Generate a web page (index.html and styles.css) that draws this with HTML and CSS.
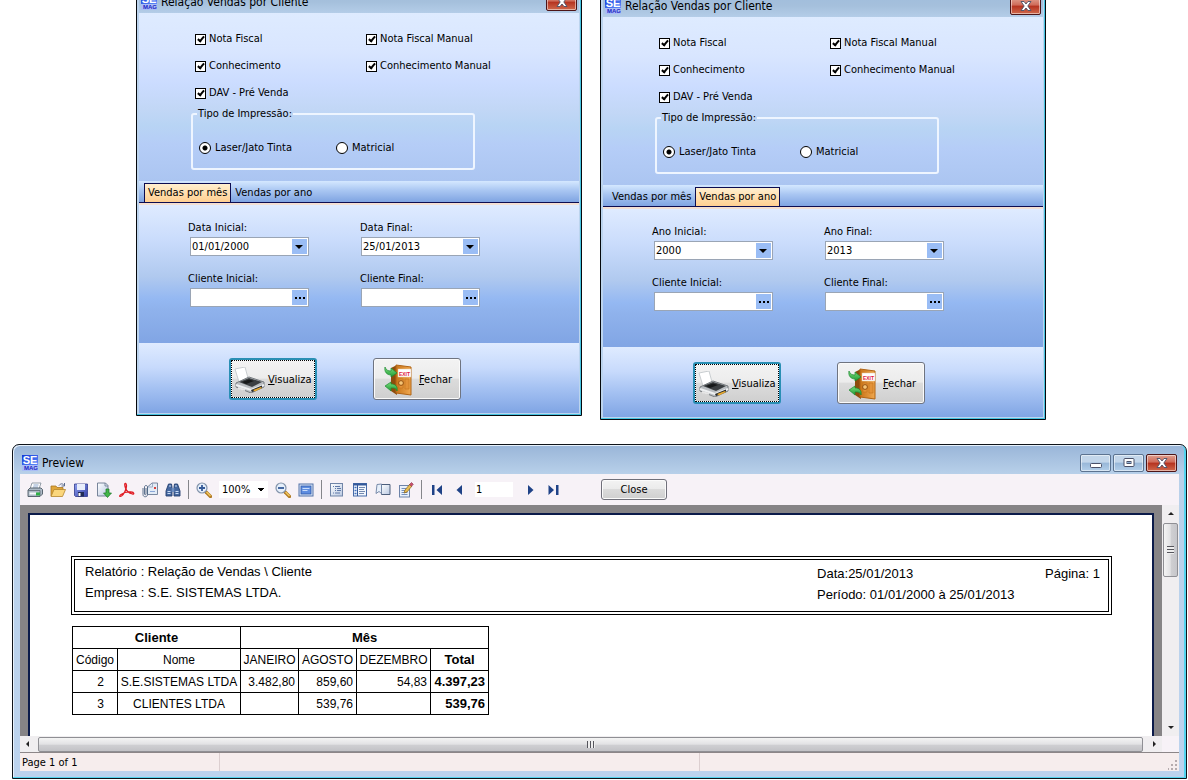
FILE: index.html
```html
<!DOCTYPE html>
<html lang="pt-BR">
<head>
<meta charset="utf-8">
<title>Relação Vendas por Cliente</title>
<link rel="stylesheet" href="styles.css">
</head>
<body>
<svg class="defs" aria-hidden="true">
  <defs>
    <linearGradient id="gBlue" x1="0" y1="0" x2="1" y2="1"><stop offset="0" stop-color="#1238d8"/><stop offset="1" stop-color="#5f8dfa"/></linearGradient>
    <linearGradient id="gDoor" x1="0" y1="0" x2="1" y2="0"><stop offset="0" stop-color="#c87418"/><stop offset="1" stop-color="#f0a850"/></linearGradient>
    <linearGradient id="gGreen" x1="0" y1="0" x2="0" y2="1"><stop offset="0" stop-color="#7ee07e"/><stop offset="1" stop-color="#1d9a35"/></linearGradient>
    <linearGradient id="gSave" x1="0" y1="0" x2="1" y2="1"><stop offset="0" stop-color="#8fa0ee"/><stop offset="1" stop-color="#3440a8"/></linearGradient>
    <linearGradient id="gPage" x1="0" y1="0" x2="1" y2="1"><stop offset="0" stop-color="#ffffff"/><stop offset="1" stop-color="#b9c8e2"/></linearGradient>
  </defs>
  <symbol id="logo" viewBox="0 0 16 16">
    <rect width="16" height="10" fill="url(#gBlue)"/>
    <rect y="10" width="16" height="6" fill="#a9bdf5"/>
    <text x="8" y="9" text-anchor="middle" class="logo-se">SE</text>
    <text x="9" y="15" text-anchor="middle" class="logo-mag">MAG</text>
  </symbol>
  <symbol id="printer" viewBox="0 0 32 26">
    <path d="M1 2 11 0 14 11 5 15Z" fill="#fff" stroke="#c9cdd0"/>
    <path d="M2 16 15 10 30 15 30 20 17 26 2 20Z" fill="#b9bdc1" stroke="#777c80"/>
    <path d="M5 15 15 11 28 15 18 20Z" fill="#3b3f42"/>
    <path d="M8 15 15 12.500 20 14 12 17Z" fill="#17191a"/>
    <path d="M2 18 17 23 30 18" fill="none" stroke="#eef0f2" stroke-width="2"/>
    <path d="M17 23 28 18.500V21L18 25Z" fill="#26292b"/>
    <path d="M19 23 27 20 28 21 21 24.500Z" fill="#e8a92e"/>
    <path d="M4 21 11 23" stroke="#e6e6e6" stroke-width="2"/>
  </symbol>
  <symbol id="exit" viewBox="0 0 29 32">
    <path d="M7 4 13 1V31L7 27Z" fill="#8d4d0c"/>
    <path d="M12 1 27 3V31L12 29Z" fill="url(#gDoor)" stroke="#b06415"/>
    <path d="M15 15h4v9h-4zM21 15h4v10h-4z" fill="#e39238" stroke="#c4731d" stroke-width=".6"/>
    <rect x="14" y="5" width="13" height="8" fill="#fff" stroke="#e2c9a9" stroke-width=".5"/>
    <text x="20.500" y="11.500" text-anchor="middle" class="exit-text">EXIT</text>
    <circle cx="17" cy="19" r="2.400" fill="#f5c476" stroke="#955010"/>
    <path d="M1 3C2 6 4 7 7 7V4L13 9 7 13V11C3 11 0 8 1 3Z" fill="url(#gGreen)" stroke="#1c8a30" stroke-width=".7"/>
    <path d="M13 27C12 24 10 24 7 24V27L1 22 7 18V20C11 20 14 22 13 27Z" fill="url(#gGreen)" stroke="#1c8a30" stroke-width=".7"/>
  </symbol>
  <symbol id="cross" viewBox="0 0 12 10">
    <path d="M1 .500h3L6 3 8 .500h3L7.800 5 11 9.500H8L6 7 4 9.500H1L4.200 5Z" fill="#fff" stroke="#4a5068" stroke-width=".9"/>
  </symbol>
</svg>

<main class="desktop">
  <section class="dialogs">
    <form class="dialog">
      <header class="titlebar">
        <svg class="logo"><use href="#logo"/></svg>
        <h2 class="title">Relação Vendas por Cliente</h2>
        <button type="button" class="win-btn win-close" aria-label="Fechar janela"><svg class="cross"><use href="#cross"/></svg></button>
      </header>
      <div class="options">
        <div class="checks">
          <label class="check"><input type="checkbox" checked><span>Nota Fiscal</span></label>
          <label class="check"><input type="checkbox" checked><span>Nota Fiscal Manual</span></label>
          <label class="check"><input type="checkbox" checked><span>Conhecimento</span></label>
          <label class="check"><input type="checkbox" checked><span>Conhecimento Manual</span></label>
          <label class="check"><input type="checkbox" checked><span>DAV - Pré Venda</span></label>
        </div>
        <fieldset class="group">
          <legend>Tipo de Impressão:</legend>
          <label class="radio"><input type="radio" name="impr1" checked><span>Laser/Jato Tinta</span></label>
          <label class="radio"><input type="radio" name="impr1"><span>Matricial</span></label>
        </fieldset>
      </div>
      <div class="tabs" role="tablist">
        <button type="button" role="tab" class="tab active" aria-selected="true">Vendas por mês</button>
        <button type="button" role="tab" class="tab" aria-selected="false">Vendas por ano</button>
      </div>
      <div class="fields">
        <div class="field"><label for="a1">Data Inicial:</label><div class="box combo"><select id="a1"><option>01/01/2000</option></select></div></div>
        <div class="field"><label for="a2">Data Final:</label><div class="box combo"><select id="a2"><option>25/01/2013</option></select></div></div>
        <div class="field"><label for="a3">Cliente Inicial:</label><div class="box"><input type="text" id="a3"><button type="button" class="more" aria-label="Procurar cliente inicial"></button></div></div>
        <div class="field"><label for="a4">Cliente Final:</label><div class="box"><input type="text" id="a4"><button type="button" class="more" aria-label="Procurar cliente final"></button></div></div>
      </div>
      <footer class="actions">
        <button type="button" class="action default"><svg class="printer"><use href="#printer"/></svg><span><u>V</u>isualiza</span></button>
        <button type="button" class="action"><svg class="exit"><use href="#exit"/></svg><span><u>F</u>echar</span></button>
      </footer>
    </form>

    <form class="dialog lower">
      <header class="titlebar">
        <svg class="logo"><use href="#logo"/></svg>
        <h2 class="title">Relação Vendas por Cliente</h2>
        <button type="button" class="win-btn win-close" aria-label="Fechar janela"><svg class="cross"><use href="#cross"/></svg></button>
      </header>
      <div class="options">
        <div class="checks">
          <label class="check"><input type="checkbox" checked><span>Nota Fiscal</span></label>
          <label class="check"><input type="checkbox" checked><span>Nota Fiscal Manual</span></label>
          <label class="check"><input type="checkbox" checked><span>Conhecimento</span></label>
          <label class="check"><input type="checkbox" checked><span>Conhecimento Manual</span></label>
          <label class="check"><input type="checkbox" checked><span>DAV - Pré Venda</span></label>
        </div>
        <fieldset class="group">
          <legend>Tipo de Impressão:</legend>
          <label class="radio"><input type="radio" name="impr2" checked><span>Laser/Jato Tinta</span></label>
          <label class="radio"><input type="radio" name="impr2"><span>Matricial</span></label>
        </fieldset>
      </div>
      <div class="tabs" role="tablist">
        <button type="button" role="tab" class="tab" aria-selected="false">Vendas por mês</button>
        <button type="button" role="tab" class="tab active" aria-selected="true">Vendas por ano</button>
      </div>
      <div class="fields">
        <div class="field"><label for="b1">Ano Inicial:</label><div class="box combo"><select id="b1"><option>2000</option></select></div></div>
        <div class="field"><label for="b2">Ano Final:</label><div class="box combo"><select id="b2"><option>2013</option></select></div></div>
        <div class="field"><label for="b3">Cliente Inicial:</label><div class="box"><input type="text" id="b3"><button type="button" class="more" aria-label="Procurar cliente inicial"></button></div></div>
        <div class="field"><label for="b4">Cliente Final:</label><div class="box"><input type="text" id="b4"><button type="button" class="more" aria-label="Procurar cliente final"></button></div></div>
      </div>
      <footer class="actions">
        <button type="button" class="action default"><svg class="printer"><use href="#printer"/></svg><span><u>V</u>isualiza</span></button>
        <button type="button" class="action"><svg class="exit"><use href="#exit"/></svg><span><u>F</u>echar</span></button>
      </footer>
    </form>
  </section>

  <section class="preview">
    <header class="titlebar">
      <svg class="logo"><use href="#logo"/></svg>
      <h2 class="title">Preview</h2>
      <button type="button" class="win-btn" aria-label="Minimizar"><svg viewBox="0 0 12 10" class="cross"><rect x=".5" y="5.500" width="11" height="4" rx="1" fill="#fff" stroke="#4a5068"/></svg></button>
      <button type="button" class="win-btn" aria-label="Maximizar"><svg viewBox="0 0 12 10" class="cross"><rect x="1" y=".5" width="10" height="8" rx="1" fill="#fff" stroke="#4a5068"/><rect x="4" y="3.500" width="4" height="2" fill="#8fb0d4" stroke="#4a5068"/></svg></button>
      <button type="button" class="win-btn win-close" aria-label="Fechar preview"><svg class="cross"><use href="#cross"/></svg></button>
    </header>

    <div class="client">
      <div class="toolbar">
        <button type="button" class="tool" aria-label="Imprimir"><svg viewBox="0 0 16 16"><path d="M5 1h9l-2 6H3Z" fill="#fff" stroke="#7c8894" stroke-width=".8"/><path d="M6.500 3h5M6 5h5" stroke="#6f8fc0" stroke-width=".8"/><path d="M1 8 3 6h11l1.500 1.500V12L13 14.500H1Z" fill="#aebac6" stroke="#4c5964" stroke-width=".9"/><path d="M1 8.500h12V14" fill="none" stroke="#5d6872" stroke-width=".8"/><path d="M2.500 10.500h7v2h-7z" fill="#f5f8fa"/><path d="M9 10.500h4v3H9z" fill="#2fae45"/></svg></button>
        <button type="button" class="tool" aria-label="Abrir"><svg viewBox="0 0 16 16"><path d="M1 14V4h5l1 1.500h6V8" fill="#e0a63a" stroke="#a87722" stroke-width=".8"/><path d="M1 14.500 4 7.500h11.500L12.500 14.500Z" fill="#fbd67c" stroke="#b5852c" stroke-width=".8"/><path d="M9 3.500c2-2.500 4-2 5 0M14.500 1v3h-3" fill="none" stroke="#5b6c8e"/></svg></button>
        <button type="button" class="tool" aria-label="Salvar"><svg viewBox="0 0 16 16"><path d="M1.500 2h13v12.500h-12l-1-1Z" fill="url(#gSave)" stroke="#30398c" stroke-width=".8"/><path d="M4 2h8v6H4z" fill="#e8edfb"/><path d="M5 10h6v4.500H5z" fill="#202a55"/><path d="M5.500 11h2v3h-2z" fill="#fff"/></svg></button>
        <button type="button" class="tool" aria-label="Exportar"><svg viewBox="0 0 16 16"><path d="M1.500 1h8L12 3.500V14H1.500Z" fill="url(#gPage)" stroke="#6a7890" stroke-width=".9"/><path d="M9 1v3h3" fill="none" stroke="#6a7890" stroke-width=".8"/><path d="M10 7h3v4h2.500l-4 4.500-4-4.500H10Z" fill="#43b649" stroke="#187626" stroke-width=".7"/></svg></button>
        <button type="button" class="tool" aria-label="PDF"><svg viewBox="0 0 16 16"><path d="M6.500 1.500C5.500 1 5.500 3 6.500 6S10 11 13.500 12c2 .5 1.500-2-1-2C8 9.500 4 11 2 12.500S.500 15 2.500 14C5 12.500 7.500 7 7.500 4 7.500 2.500 7 1.500 6.500 1.500Z" fill="none" stroke="#e01c24" stroke-width="1.300"/></svg></button>
        <button type="button" class="tool" aria-label="Enviar por e-mail"><svg viewBox="0 0 16 16"><path d="M5.500 5 10 1h5.500v11.500H5.500Z" fill="#e3ebf6" stroke="#6d7c96" stroke-width=".9"/><path d="M5.500 5h5V1" fill="none" stroke="#8fa0ba" stroke-width=".8"/><path d="M12 5h2v2h-2z" fill="#d8403a"/><path d="M8 9.500h5" stroke="#8ba7d8"/><path d="M1 6v6.500c0 3 4.500 3 4.500 0V5c0-2-3-2-3 0v7c0 1 1.500 1 1.500 0V6" fill="none" stroke="#4d6482" stroke-width=".9"/></svg></button>
        <button type="button" class="tool" aria-label="Localizar"><svg viewBox="0 0 16 16"><path d="M3.500 2h3l.5 3v9H1V9Zm6 0h3L15 9v5H9V5Z" fill="#4668a0" stroke="#253f70" stroke-width=".9"/><path d="M6.500 6h3v4h-3z" fill="#6d8dc0"/><path d="M2.500 9.500h3M10.500 9.500h3M4 4h2M10 4h2M2.500 11.500h3M10.500 11.500h3" stroke="#cadcf6"/></svg></button>
        <span class="sep"></span>
        <button type="button" class="tool" aria-label="Aumentar zoom"><svg viewBox="0 0 16 16"><path d="m10 10 4.500 4.500" stroke="#b17a22" stroke-width="3.200" stroke-linecap="round"/><path d="m10.500 10 4 4" stroke="#f2c860" stroke-width="1.500"/><circle cx="6" cy="6" r="5" fill="#e6effb" stroke="#8494ab" stroke-width="1.200"/><path d="M3 6h6M6 3v6" stroke="#355a98" stroke-width="1.800"/></svg></button>
        <select class="zoom" aria-label="Zoom"><option>100%</option></select>
        <button type="button" class="tool" aria-label="Diminuir zoom"><svg viewBox="0 0 16 16"><path d="m10 10 4.500 4.500" stroke="#b17a22" stroke-width="3.200" stroke-linecap="round"/><path d="m10.500 10 4 4" stroke="#f2c860" stroke-width="1.500"/><circle cx="6" cy="6" r="5" fill="#e6effb" stroke="#8494ab" stroke-width="1.200"/><path d="M3 6h6" stroke="#355a98" stroke-width="1.800"/></svg></button>
        <button type="button" class="tool" aria-label="Tela cheia"><svg viewBox="0 0 16 16"><rect x="1" y="2" width="14" height="12" fill="#d9e5f8" stroke="#5572a8"/><rect x="3" y="4" width="10" height="8" fill="#5f8de0" stroke="#2d58a8" stroke-width=".8"/><path d="M4.500 6.500h7M4.500 8.500h5" stroke="#c9dcfb"/></svg></button>
        <span class="sep"></span>
        <button type="button" class="tool" aria-label="Estrutura"><svg viewBox="0 0 16 16"><rect x="1.500" y="1.500" width="12" height="12.500" fill="url(#gPage)" stroke="#7185a8"/><path d="M4 4.500h1M6 4.500h5M6 6.500h1M8 6.500h4M6 8.500h1M8 8.500h4M4 11h1M6 11h5" stroke="#6079a8"/></svg></button>
        <button type="button" class="tool" aria-label="Miniaturas"><svg viewBox="0 0 16 16"><rect x="1.500" y="1.500" width="13" height="12.500" fill="#f2f6fd" stroke="#466aa8"/><path d="M1.500 2.500h13" stroke="#34589a" stroke-width="2"/><path d="M5.500 2v12" stroke="#34589a"/><path d="M2.500 5.500h2M2.500 8.500h2M2.500 11.500h2" stroke="#4371bd" stroke-width="1.500"/><path d="M7 5.500h6M7 7.500h5M7 9.500h6M7 11.500h5" stroke="#7389b0"/></svg></button>
        <button type="button" class="tool" aria-label="Margens"><svg viewBox="0 0 16 16"><path d="M6.500 2.500h8.500v10H6.500Z" fill="url(#gPage)" stroke="#4e5f7c"/><path d="M6.500 9.500V2L2 2.500 1 11.500l3-2 2.500 2Z" fill="#e7effa" stroke="#6c80a2" stroke-width=".9"/></svg></button>
        <button type="button" class="tool" aria-label="Editar"><svg viewBox="0 0 16 16"><rect x="1.500" y="3.500" width="10" height="11.500" fill="#eaf1fb" stroke="#6d83a8"/><path d="M3.500 6.500h5M3.500 8.500h4M3.500 10.500h6M3.500 12.500h6" stroke="#7590bc"/><path d="m6 11 1-3 5-6 2 2-5 6Z" fill="#e9bd50" stroke="#86611a" stroke-width=".7"/><path d="m11.500 2.500 2-2 1.800 1.800-1.800 2Z" fill="#c8506c" stroke="#8c2c46" stroke-width=".6"/></svg></button>
        <span class="sep"></span>
        <button type="button" class="tool" aria-label="Primeira página"><svg viewBox="0 0 16 16"><path d="M3 3h2.500v10H3zM13 3v10L7.500 8Z" fill="#1f4287"/></svg></button>
        <button type="button" class="tool" aria-label="Página anterior"><svg viewBox="0 0 16 16"><path d="M10 3v10L4.500 8Z" fill="#1f4287"/></svg></button>
        <input class="page-no" type="text" value="1" aria-label="Página">
        <button type="button" class="tool" aria-label="Próxima página"><svg viewBox="0 0 16 16"><path d="M8 3v10l5.500-5Z" fill="#1f4287"/></svg></button>
        <button type="button" class="tool" aria-label="Última página"><svg viewBox="0 0 16 16"><path d="M13 3h2.500v10H13zM5.500 3v10L11 8Z" fill="#1f4287"/></svg></button>
        <button type="button" class="close-btn">Close</button>
      </div>

      <div class="viewer">
        <div class="canvas">
          <article class="page">
            <div class="report-head">
              <div class="rh-left"><p>Relatório : Relação de Vendas \ Cliente</p><p>Empresa : S.E. SISTEMAS LTDA.</p></div>
              <div class="rh-mid"><p>Data:25/01/2013</p><p>Período: 01/01/2000 à 25/01/2013</p></div>
              <p class="rh-page">Página: 1</p>
            </div>
            <table class="report">
              <colgroup><col class="c-cod"><col class="c-nome"><col class="c-mes"><col class="c-mes"><col class="c-dez"><col class="c-mes"></colgroup>
              <thead>
                <tr><th class="strong" colspan="2">Cliente</th><th class="strong" colspan="4">Mês</th></tr>
                <tr><th>Código</th><th>Nome</th><th>JANEIRO</th><th>AGOSTO</th><th>DEZEMBRO</th><th class="strong">Total</th></tr>
              </thead>
              <tbody>
                <tr><td class="cod">2</td><td class="nome">S.E.SISTEMAS LTDA</td><td>3.482,80</td><td>859,60</td><td>54,83</td><td class="strong">4.397,23</td></tr>
                <tr><td class="cod">3</td><td class="nome">CLIENTES LTDA</td><td></td><td>539,76</td><td></td><td class="strong">539,76</td></tr>
              </tbody>
            </table>
          </article>
        </div>
        <div class="vbar"><i class="arrow up"></i><div class="vthumb"><i></i></div><i class="arrow down"></i></div>
        <div class="hbar"><i class="arrow left"></i><div class="hthumb"><i></i></div><i class="arrow right"></i></div>
        <div class="corner"></div>
      </div>

      <footer class="status">
        <span class="st-page">Page 1 of 1</span><span class="st-mid"></span><span class="st-end"></span>
        <svg class="grip" viewBox="0 0 10 10"><path d="M7 0h2v2H7zM7 4h2v2H7zM3 4h2v2H3zM7 8h2v2H7zM3 8h2v2H3zM0 8h1v2H0z" fill="#b5abad"/></svg>
      </footer>
    </div>
  </section>
</main>
</body>
</html>
```
FILE: styles.css
```css
* { box-sizing: border-box; }

body {
  margin: 0;
  background: #fff;
  color: #000;
  font: 11px/14px "DejaVu Sans Condensed", Tahoma, "Noto Sans", sans-serif;
  overflow: hidden;
}

h2, p, fieldset { margin: 0; }
button, input, select { font: inherit; color: inherit; margin: 0; }
button { padding: 0; }
.defs { position: absolute; width: 0; height: 0; }
.logo-se { font: bold 11px "Liberation Sans", sans-serif; fill: #fff; }
.logo-mag { font: bold 6px "Liberation Sans", sans-serif; fill: #1c22c4; }
.exit-text { font: bold 5px "Liberation Sans", sans-serif; fill: #e0203c; }

.desktop {
  display: flex;
  flex-direction: column;
  height: 100vh;
  padding-bottom: 1px;
}

/* Dialog windows */
.dialogs {
  display: flex;
  align-items: flex-start;
  gap: 18px;
  margin-top: -16px;
  padding-left: 136px;
}
.dialog {
  width: 446px;
  border: 1px solid #05080d;
  border-radius: 7px 7px 0 0;
  box-shadow: inset -1px -1px #45c3e0;
  padding: 0 2px 2px;
  background: #bcd4ee;
}
.dialog.lower { margin-top: 4px; }

.titlebar {
  display: flex;
  align-items: center;
  gap: 2px;
  height: 28px;
  padding: 6px 2px 0 2px;
}
.dialog .titlebar { background: linear-gradient(#9ebbdc, #a5c0dc 60%, #b4cde8); }
.logo { width: 16px; height: 16px; margin-right: 2px; }
.title { flex: 1; font-weight: normal; font-size: 12px; line-height: 16px; }
.win-btn {
  display: flex;
  align-items: center;
  justify-content: center;
  width: 31px;
  height: 18px;
  border: 1px solid #5c7390;
  border-radius: 2px;
  box-shadow: inset 0 0 0 1px rgba(255, 255, 255, .5);
  background: linear-gradient(#c3d6ea 45%, #98b7d8 50%, #b3cfea);
}
.win-close {
  border-color: #4c1518;
  background: linear-gradient(#e0a090, #cf6a58 45%, #b5321f 50%, #d0694c);
}
.cross { width: 12px; height: 10px; }

.options {
  padding: 16px 0 11px;
  background: linear-gradient(#deebff, #d9e6ff 22%, #cbdcff 42%, #c2d7f6 57%, #b8d4f4 67%, #b5cdf7 78%, #abc5f1);
}
.checks {
  display: grid;
  grid-template-columns: 171px 1fr;
  row-gap: 7px;
  padding-left: 56px;
}
.check, .radio { display: flex; align-items: center; }
.check { gap: 3px; height: 20px; }
.radio { gap: 4px; }
.check input {
  appearance: none;
  width: 11px;
  height: 11px;
  border: 1px solid #000;
  background: #fff;
  position: relative;
}
.check input:checked::after {
  content: "";
  position: absolute;
  left: 3px;
  top: 0;
  width: 4px;
  height: 7px;
  border: solid #000;
  border-width: 0 2px 2px 0;
  box-sizing: border-box;
  transform: rotate(40deg);
}
.radio input {
  appearance: none;
  width: 12px;
  height: 12px;
  border: 1px solid #000;
  border-radius: 50%;
  background: #fff;
}
.radio input:checked { background: radial-gradient(circle, #000 0 2px, #fff 3px); }
.group {
  display: grid;
  grid-template-columns: 137px 1fr;
  width: 284px;
  height: 63px;
  margin: 4px 0 0 52px;
  padding: 20px 0 0 6px;
  align-items: start;
  border: 2px solid #eef5ff;
  border-radius: 3px;
}
.group legend { padding: 0 1px; margin-left: -2px; }

.tabs {
  display: flex;
  align-items: flex-end;
  height: 22px;
  padding-left: 5px;
  border-bottom: 1px solid #0c0c50;
  background: linear-gradient(#d4e8ff, #a9c6f2 45%, #7fa4e2);
}
.tab {
  height: 19px;
  padding: 0 3px;
  border: 1px solid transparent;
  border-bottom: 0;
  background: none;
  line-height: 18px;
  white-space: nowrap;
}
.tab.active {
  border-color: #0c0c50;
  background: linear-gradient(#ffefcf, #ffcf91);
}

.fields {
  display: grid;
  grid-template-columns: 119px 119px;
  gap: 16px 52px;
  padding: 16px 0 36px 51px;
  border-top: 2px solid #f3dfd3;
  background: linear-gradient(#dfebff, #cadcfc 25%, #b0c9ef 52%, #94b8f2 68%, #8fb2ec 76%, #81a5e4);
}
.field label { display: block; height: 16px; }
.field:nth-child(odd) label { margin-left: -2px; }
.field:nth-child(even) label { margin-left: -1px; }
.box {
  display: flex;
  height: 19px;
  border: 1px solid #9aa5b5;
  background: #fff;
  padding: 1px;
  position: relative;
}
.box select, .box input {
  appearance: none;
  flex: 1;
  min-width: 0;
  border: 0;
  padding: 0;
  background: none;
  line-height: 15px;
}
.more {
  display: grid;
  place-items: center;
  width: 15px;
  border: 0;
  background: #9abdf5;
}
.more::before {
  content: "";
  width: 2px;
  height: 2px;
  background: #000;
  box-shadow: -4px 0 #000, 4px 0 #000;
}
.combo::after {
  content: "";
  position: absolute;
  right: 1px;
  top: 1px;
  width: 15px;
  height: 15px;
  background: #9abdf5;
  pointer-events: none;
}
.combo::before {
  content: "";
  position: absolute;
  z-index: 1;
  right: 5px;
  top: 7px;
  border: 4px solid transparent;
  border-top-color: #000;
  border-bottom: 0;
  pointer-events: none;
}

.actions {
  display: flex;
  gap: 56px;
  padding: 15px 0 13px 90px;
  background: linear-gradient(#dfebff, #c7dafc 35%, #a4c1f2 65%, #80a5e4);
}
.action {
  display: flex;
  align-items: center;
  gap: 5px;
  width: 88px;
  height: 42px;
  padding: 3px 4px 1px;
  border: 1px solid #6f7480;
  border-radius: 3px;
  box-shadow: inset 0 0 0 1px #fafafa;
  background: linear-gradient(#f3f3f3, #ececec 48%, #dcdcdc 50%, #cfcfcf);
}
.action:not(.default) { padding-left: 10px; gap: 6px; }
.action.default {
  gap: 2px;
  border: 2px solid #2a8fb4;
  padding: 2px 3px 0;
  outline: 1px dotted #000;
  outline-offset: -3px;
}
.action span { white-space: nowrap; }
.printer { width: 32px; height: 26px; flex: none; }
.exit { width: 29px; height: 32px; flex: none; }

/* Preview window */
.preview {
  flex: 1;
  min-height: 0;
  display: flex;
  flex-direction: column;
  margin: 28px 1px 0 12px;
  border: 1px solid #10141a;
  border-radius: 7px 7px 0 0;
  box-shadow: inset -2px -1px #54d4ee, inset 1px 1px #e8f2fc;
  padding: 0 7px 7px;
  background: linear-gradient(#99b5d8, #b9d1ea 30px, #bcd3ee);
  margin-top: 24px;
}
.preview .titlebar { height: 29px; }
.client {
  flex: 1;
  min-height: 0;
  display: flex;
  flex-direction: column;
  background: #f7f2f7;
}
.toolbar {
  display: flex;
  align-items: center;
  gap: 7px;
  height: 31px;
  padding-left: 7px;
}
.tool { width: 16px; height: 16px; border: 0; background: none; }
.tool svg { display: block; width: 16px; height: 16px; }
.sep { width: 1px; height: 19px; background: #85858a; }
.zoom {
  appearance: none;
  width: 49px;
  height: 17px;
  border: 0;
  padding: 0 0 0 3px;
  background:
    linear-gradient(to bottom right, #000 50%, transparent 50%) 42px 7px / 3px 3px no-repeat,
    linear-gradient(to bottom left, #000 50%, transparent 50%) 39px 7px / 3px 3px no-repeat,
    #fff;
}
.page-no { width: 38px; height: 15px; border: 0; padding: 0 0 0 1px; }
.close-btn {
  width: 66px;
  height: 21px;
  margin-left: 35px;
  border: 1px solid #70707a;
  border-radius: 3px;
  box-shadow: inset 0 0 0 1px #fbfbfb;
  background: linear-gradient(#f3f3f3, #ebebeb 48%, #dbdbdb 50%, #cfcfcf);
}

.viewer {
  flex: 1;
  min-height: 0;
  display: grid;
  grid-template: minmax(0, 1fr) 16px / minmax(0, 1fr) 17px;
}
.canvas {
  padding: 8px 8px 0;
  background: #868486;
  overflow: hidden;
}
.page {
  height: 100%;
  border: 2px solid #0b1b4a;
  border-bottom: 0;
  padding: 41px 40px 0 41px;
  background: #fff;
  font-family: "Liberation Sans", Arial, sans-serif;
}
.report-head {
  display: flex;
  height: 59px;
  padding: 1px 8px 0 10px;
  border: 4px double #000;
  font-size: 13px;
  line-height: 21px;
}
.rh-left { flex: 1; }
.rh-mid, .rh-page { padding-top: 2px; }
.rh-mid { width: 228px; }

.report {
  table-layout: fixed;
  width: 417px;
  margin: 11px 0 0 1px;
  border-collapse: collapse;
  font-size: 12px;
  line-height: 14px;
}
.c-cod { width: 45px; }
.c-nome { width: 123px; }
.c-mes { width: 58px; }
.c-dez { width: 74px; }
.report th, .report td {
  height: 22px;
  padding: 0 3px;
  border: 1px solid #000;
  font-weight: normal;
  text-align: right;
  white-space: nowrap;
}
.report th { padding: 0; text-align: center; }
.report .strong { font-weight: bold; font-size: 13px; }
.report td.cod { padding-right: 13px; }
.report td.nome { padding: 0; text-align: center; }

.vbar, .hbar { display: flex; align-items: center; background: #f0eef0; }
.vbar { flex-direction: column; padding: 7px 1px 7px; }
.hbar { padding: 0 6px; }
.corner { background: #f7f2f7; }
.arrow { border: 3px solid transparent; }
.up { border-bottom-color: #222; border-top: 0; }
.down { border-top-color: #222; border-bottom: 0; margin-top: auto; }
.left { border-right-color: #222; border-left: 0; }
.right { border-left-color: #222; border-right: 0; }
.vthumb, .hthumb {
  display: flex;
  align-items: center;
  justify-content: center;
  border: 1px solid #8f8f94;
  border-radius: 2px;
}
.vthumb { width: 15px; height: 54px; margin-top: 8px; background: linear-gradient(90deg, #f4f4f4, #e2e2e4 48%, #cfcfd2 55%, #c6c6ca); }
.hthumb { flex: 1; height: 15px; margin: 0 10px 0 9px; background: linear-gradient(#f4f4f4, #e2e2e4 48%, #cfcfd2 55%, #c2c2c6); }
.vthumb i { width: 7px; height: 8px; background: repeating-linear-gradient(#55555c 0 1px, #eee 1px 3px); }
.hthumb i { width: 8px; height: 7px; background: repeating-linear-gradient(90deg, #55555c 0 1px, #eee 1px 3px); }

.status {
  display: flex;
  align-items: center;
  height: 19px;
  border-top: 1px solid #8c8688;
  background: #f6eded;
}
.status span { align-self: stretch; line-height: 20px; }
.st-page { width: 200px; padding-left: 2px; border-right: 1px solid #dccfd0; }
.st-mid { width: 480px; border-right: 1px solid #dccfd0; }
.st-end { flex: 1; }
.grip { width: 10px; height: 10px; align-self: flex-end; margin: 0 1px 1px 0; }
```
